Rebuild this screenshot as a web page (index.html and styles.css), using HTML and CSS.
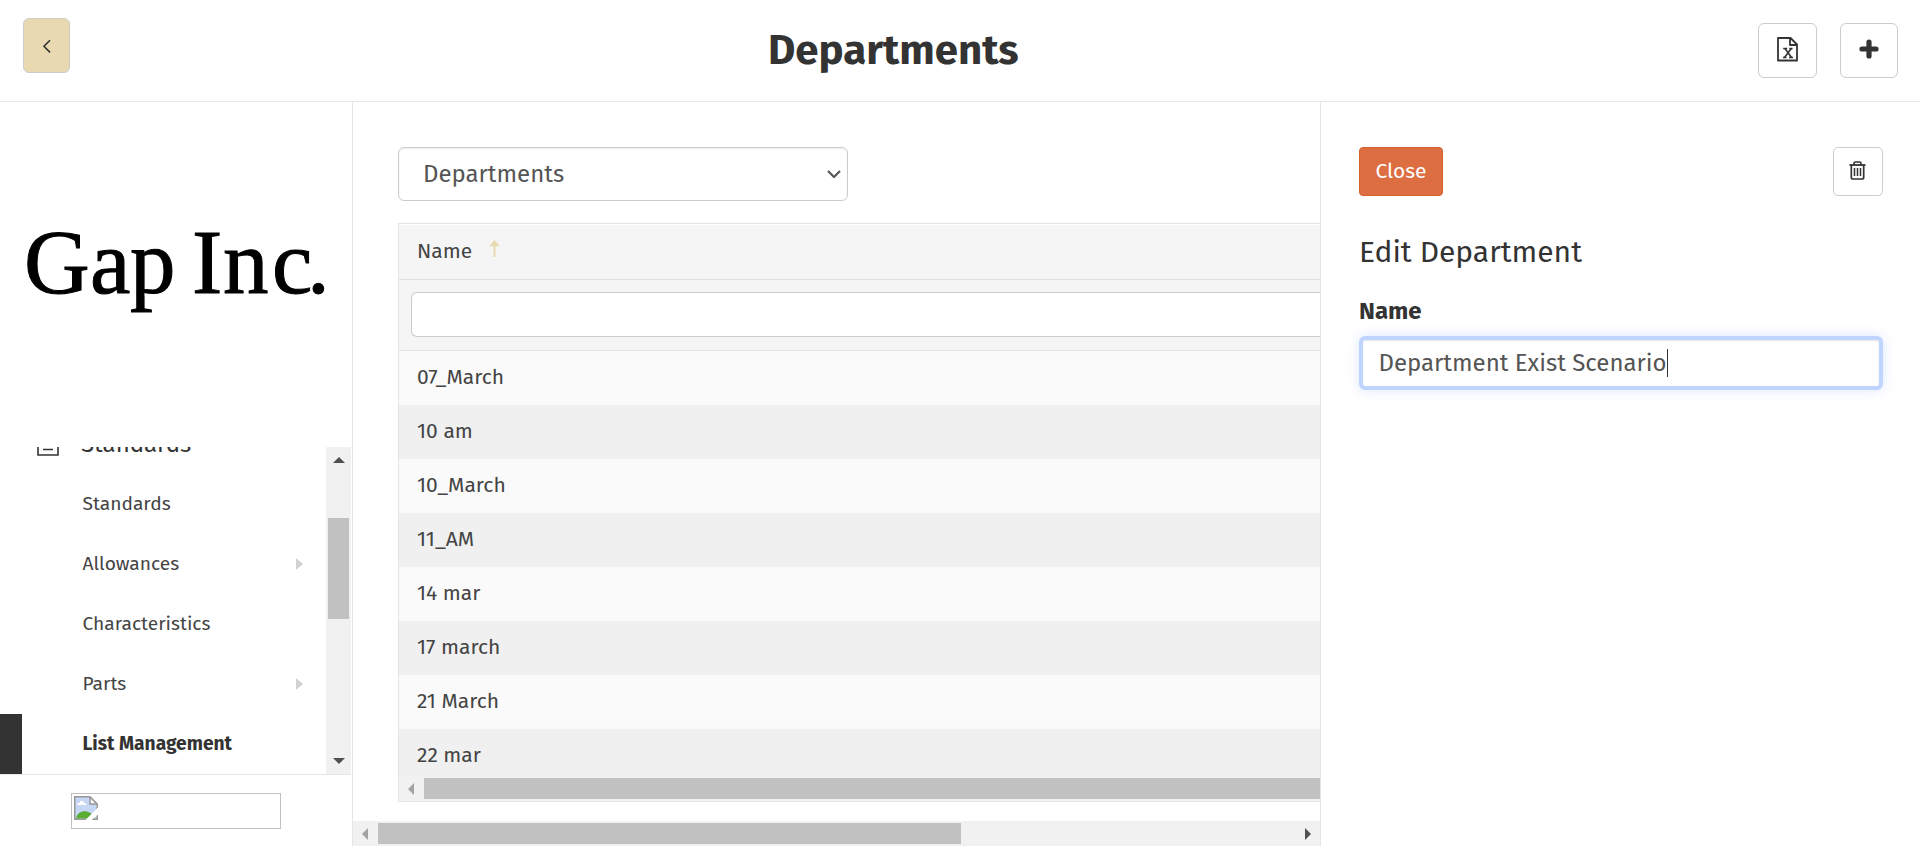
FILE: index.html
```html
<!DOCTYPE html>
<html lang="en">
<head>
<meta charset="utf-8">
<title>Departments</title>
<link rel="stylesheet" href="styles.css">
</head>
<body>
<header class="topbar">
  <button class="btn back" aria-label="Back"><svg width="10" height="15" viewBox="0 0 10 15"><path d="M8 1.2 2 7.3l6 6.1" fill="none" stroke="#333" stroke-width="1.6"/></svg></button>
  <h1 class="title">Departments</h1>
  <div class="actions">
    <button class="btn export" aria-label="Export"><svg width="21" height="25" viewBox="0 0 21 25" fill="none" stroke="#333"><path d="M1 1h12.500l6.500 6.500V23.500H1zM13 1v7h7" stroke-width="1.800" stroke-linejoin="round"/><path d="M8 11.500l6.500 9M14.300 11.500l-6.800 9" stroke-width="1.600"/><path d="M6.200 11.500h4M12.300 11.500h3.300M6 20.500h3.500M12 20.500h4" stroke-width="1.300"/></svg></button>
    <button class="btn add" aria-label="Add"><svg width="20" height="20" viewBox="0 0 20 20"><path d="M10 3v14M3 10h14" stroke="#333" stroke-width="5.200" stroke-linecap="round"/></svg></button>
  </div>
</header>
<div class="body">
  <aside class="sidebar">
    <div class="brand">
      <svg class="logo" width="300" height="85" viewBox="0 0 300 85"><text class="logo-text" y="61" x="-2 64 104 166 197 246 281">GapInc.</text></svg>
    </div>
    <div class="nav-wrap">
      <nav class="nav">
        <a class="item parent"><svg class="doc" width="22" height="24" viewBox="0 0 22 24" fill="none" stroke="#333" stroke-width="1.600"><path d="M1 1h20v22H1zM6 7h10M6 12h10M6 17.500h10"/></svg><span>Standards</span><svg class="down" width="11" height="7" viewBox="0 0 11 7"><path d="M0 0h11L5.500 6.500z" fill="#999"/></svg></a>
        <a class="item"><span>Standards</span></a>
        <a class="item"><span>Allowances</span><i class="caret"></i></a>
        <a class="item"><span>Characteristics</span></a>
        <a class="item"><span>Parts</span><i class="caret"></i></a>
        <a class="item active"><span>List Management</span></a>
      </nav>
      <div class="vscroll"><i class="tri up"></i><i class="vthumb"></i><i class="tri dn"></i></div>
    </div>
    <div class="foot">
      <div class="missing"><svg width="24" height="24" viewBox="0 0 24 24"><path d="M.75.75h15l7.500 7.500v15H.75z" fill="#c6d7f6" stroke="#999" stroke-width="1.500"/><path d="M3 9c0-2 2-2 2.500-2 .5-3 4-3 4.500 0 2 0 2.500 1 2.500 2z" fill="#fff"/><path d="M2 22.500c2-9 14-10 19 0z" fill="#5aac35"/><path d="M16 1v7h7z" fill="#fff" stroke="#999" stroke-width="1.500"/><path d="M24.500 11 11 24.500h6l7.500-6.500z" fill="#fff"/></svg></div>
    </div>
  </aside>
  <main class="main">
    <div class="select"><span>Departments</span><svg width="14" height="9" viewBox="0 0 14 9"><path d="M1 1l6 6 6-6" fill="none" stroke="#555" stroke-width="2.200"/></svg></div>
    <section class="grid">
      <div class="head"><span>Name</span><svg width="11" height="17" viewBox="0 0 11 17"><path d="M5.500 0 11 6.200H6.500V17H4.500V6.200H0z" fill="#e8d9b1"/></svg></div>
      <div class="filter"><div class="filter-input"></div></div>
      <div class="rows">
        <div class="row">07_March</div>
        <div class="row">10 am</div>
        <div class="row">10_March</div>
        <div class="row">11_AM</div>
        <div class="row">14 mar</div>
        <div class="row">17 march</div>
        <div class="row">21 March</div>
        <div class="row">22 mar</div>
      </div>
      <div class="hscroll inner"><i class="tri lt"></i><i class="hthumb"></i></div>
    </section>
    <div class="hscroll outer"><i class="tri lt"></i><i class="hthumb"></i><i class="tri rt"></i></div>
  </main>
  <section class="panel">
    <div class="panel-top">
      <button class="close">Close</button>
      <button class="btn trash" aria-label="Delete"><svg width="17" height="19" viewBox="0 0 17 19" fill="none" stroke="#333"><path d="M.5 4h16" stroke-width="1.800"/><path d="M5 4V2.500Q5 1 6.500 1h4Q12 1 12 2.500V4M2.300 4v12.200q0 1.800 1.700 1.800h9q1.700 0 1.700-1.800V4" stroke-width="1.700"/><path d="M5.500 7v8M8.500 7v8M11.500 7v8" stroke-width="1.500"/></svg></button>
    </div>
    <h2 class="panel-title">Edit Department</h2>
    <div class="label">Name</div>
    <div class="field"><span>Department Exist Scenario</span><i class="cursor"></i></div>
  </section>
</div>
</body>
</html>
```
FILE: styles.css
```css
* { box-sizing: border-box; }
body { margin: 0; width: 1920px; height: 846px; overflow: hidden; display: flex; flex-direction: column; background: #fff; color: #333; font-family: "Fira Sans", "Noto Sans", sans-serif; }
svg { display: block; flex: none; }
button { font: inherit; padding: 0; }
h1, h2 { margin: 0; }
.topbar { height: 102px; flex: none; border-bottom: 1px solid #e6e6e6; display: flex; align-items: flex-start; padding: 18px 22px 0 23px; }
.btn { display: flex; align-items: center; justify-content: center; background: #fff; border: 1px solid #ccc; border-radius: 6px; }
.back { width: 47px; height: 55px; padding-top: 1px; background: #e8d9b1; }
.title { font-size: 42px; line-height: 54px; font-weight: 700; margin: 5px auto 0 698px; }
.actions { display: flex; gap: 23px; padding-top: 5px; }
.export { width: 59px; height: 55px; padding-bottom: 2px; }
.add { width: 58px; height: 55px; padding: 0 1px 4px 0; }
.body { flex: 1; min-height: 0; display: flex; }
.sidebar { width: 353px; flex: none; border-right: 1px solid #e6e6e6; display: flex; flex-direction: column; }
.brand { height: 345px; flex: none; padding: 130px 0 0 26px; }
.logo { overflow: visible; }
.logo-text { font-family: "Liberation Serif", serif; font-size: 91px; fill: #000; stroke: #000; stroke-width: 1px; }
.nav-wrap { height: 327px; flex: none; display: flex; overflow: hidden; }
.nav { flex: 1; display: flex; flex-direction: column; justify-content: flex-end; }
.item { height: 60px; flex: none; display: flex; align-items: center; justify-content: space-between; padding: 0 23px 1px 82.5px; font-size: 19.2px; color: #444; }
.parent { padding: 0 24px 1px 37px; font-size: 24px; color: #333; justify-content: flex-start; }
.parent span { margin-left: 22px; }
.down { margin-left: auto; }
.caret { border-left: 7px solid #d2d2d2; border-top: 6px solid transparent; border-bottom: 6px solid transparent; }
.active { border-left: 22px solid #333; padding-left: 60.5px; font-weight: 700; color: #333; }
.vscroll { width: 25px; margin-right: 1px; background: #f1f1f1; display: flex; flex-direction: column; align-items: center; padding: 10px 0; }
.vthumb { width: 21px; height: 101px; margin: 55px 0 auto; background: #c1c1c1; }
.tri { width: 0; height: 0; flex: none; border: 6px solid transparent; }
.up { border-width: 0 6px 6px; border-bottom-color: #505050; }
.dn { border-width: 6px 6px 0; border-top-color: #505050; }
.lt { border-width: 6px 6px 6px 0; border-right-color: #a3a3a3; }
.rt { border-width: 6px 0 6px 6px; border-left-color: #505050; }
.foot { flex: 1; width: 351px; border-top: 1px solid #e6e6e6; padding: 18px 0 0 71px; }
.missing { width: 210px; height: 36px; border: 1px solid #c0c0c0; padding: 2px; }
.main { width: 967px; flex: none; display: flex; flex-direction: column; padding-top: 45px; overflow: hidden; }
.select { width: 450px; height: 54px; flex: none; margin-left: 45px; border: 1px solid #ccc; border-radius: 6px; box-shadow: inset 0 1px 2px rgba(0,0,0,.08); display: flex; align-items: center; justify-content: space-between; padding: 0 6px 0 24px; font-size: 24px; color: #555; }
.grid { margin: 22px 0 0 45px; height: 579px; flex: none; border: 1px solid #e4e4e4; border-right: 0; display: flex; flex-direction: column; overflow: hidden; color: #444; }
.head { height: 56px; flex: none; background: #f5f5f5; border-top: 1px solid #fff; border-bottom: 1px solid #e0e0e0; display: flex; align-items: center; padding: 0 0 3px 18px; font-size: 21px; gap: 17px; }
.head svg { margin-bottom: 4px; }
.filter { height: 71px; flex: none; background: #f5f5f5; border-bottom: 1px solid #e2e2e2; padding: 12px 0 0 12px; }
.filter-input { height: 45px; background: #fff; border: 1px solid #ccc; border-right: 0; border-radius: 6px 0 0 6px; }
.rows { height: 425px; flex: none; overflow: hidden; }
.row { height: 54px; padding-left: 18px; line-height: 52px; font-size: 21px; background: #fafafa; }
.row:nth-child(even) { background: #f0f0f0; }
.hscroll { height: 25px; flex: none; background: #f1f1f1; display: flex; align-items: center; padding: 0 9px; }
.hthumb { height: 21px; background: #c1c1c1; margin-left: 10px; }
.inner { padding-right: 0; }
.inner .hthumb { flex: 1; }
.outer { margin-top: 19px; }
.outer .hthumb { width: 583px; margin-right: auto; }
.panel { flex: 1; border-left: 1px solid #e6e6e6; padding: 45px 37px 0 38px; background: #fff; }
.panel-top { display: flex; justify-content: space-between; }
.close { width: 84px; height: 49px; border: 1px solid #d9602f; border-radius: 4px; background: #dd6e42; color: #fff; font-size: 21px; padding-bottom: 2px; }
.trash { width: 50px; height: 49px; padding: 0 1px 2px 0; border-radius: 5px; }
.panel-title { font-size: 30px; font-weight: 400; line-height: 38px; margin: 37px 0 0; }
.label { font-size: 24px; font-weight: 700; line-height: 32px; margin-top: 24px; }
.field { height: 54px; margin-top: 9px; border: 4px solid #bfd4ff; border-radius: 6px; box-shadow: 0 0 12px rgba(191,212,255,.6), inset 0 1px 2px rgba(0,0,0,.1); display: flex; align-items: center; padding: 0 0 0 15.5px; font-size: 24px; color: #555; }
.cursor { width: 1px; height: 28px; background: #333; }
```
